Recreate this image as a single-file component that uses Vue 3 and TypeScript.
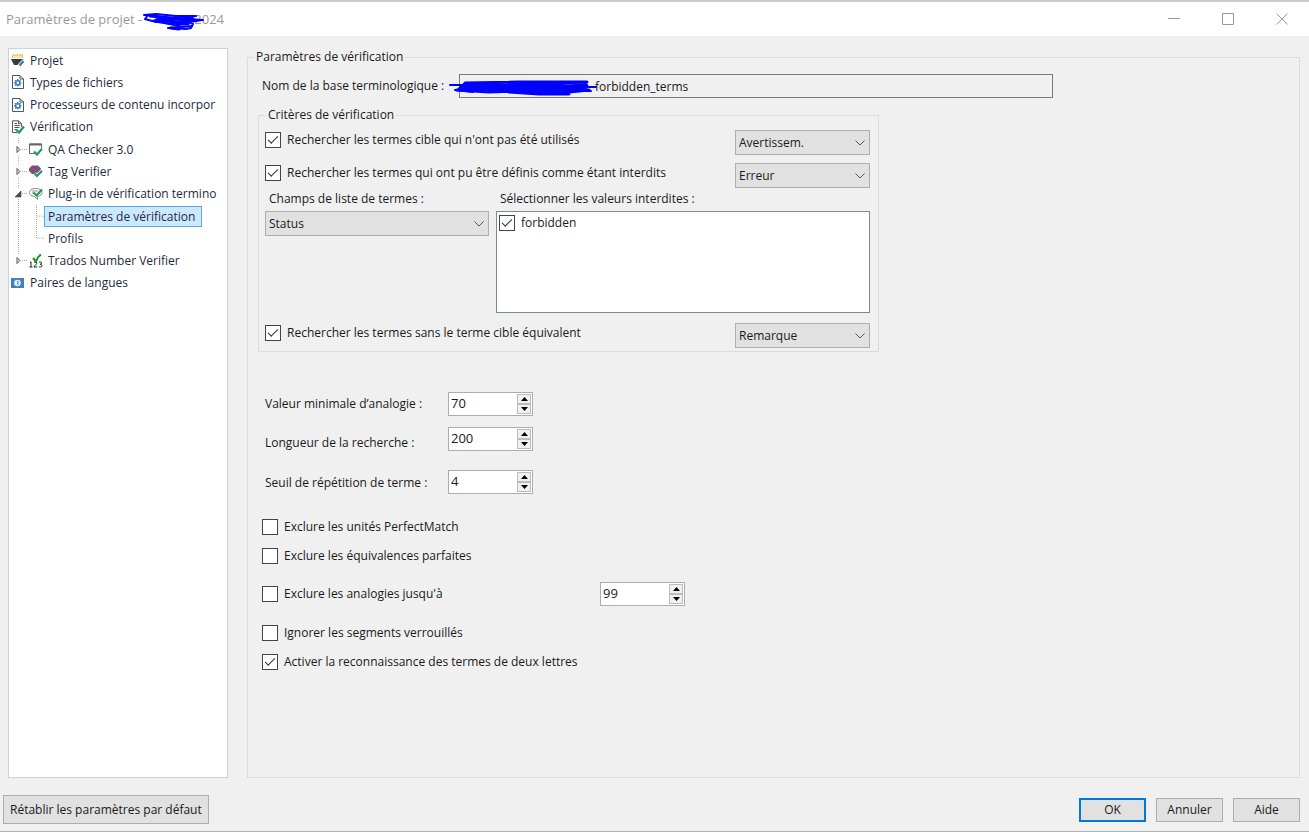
<script setup lang="ts">
import { reactive, ref } from 'vue'

type IconName = 'project' | 'file' | 'check' | 'qa' | 'tag' | 'term' | 'number' | 'lang'

interface TreeRow {
  label: string
  level: 0 | 1 | 2
  icon?: IconName
  open?: boolean
  last?: boolean
}

const rows: TreeRow[] = [
  { label: 'Projet', level: 0, icon: 'project' },
  { label: 'Types de fichiers', level: 0, icon: 'file' },
  { label: 'Processeurs de contenu incorpor', level: 0, icon: 'file' },
  { label: 'Vérification', level: 0, icon: 'check' },
  { label: 'QA Checker 3.0', level: 1, icon: 'qa' },
  { label: 'Tag Verifier', level: 1, icon: 'tag' },
  { label: 'Plug-in de vérification termino', level: 1, icon: 'term', open: true },
  { label: 'Paramètres de vérification', level: 2 },
  { label: 'Profils', level: 2, last: true },
  { label: 'Trados Number Verifier', level: 1, icon: 'number', last: true },
  { label: 'Paires de langues', level: 0, icon: 'lang' },
]

const selected = ref('Paramètres de vérification')

const form = reactive({
  termbase: 'forbidden_terms',
  unused: true,
  unusedLevel: 'Avertissem.',
  forbidden: true,
  forbiddenLevel: 'Erreur',
  field: 'Status',
  valueForbidden: true,
  missing: true,
  missingLevel: 'Remarque',
  upTo: 99,
})

const levels = ['Erreur', 'Avertissem.', 'Remarque']

const amounts = reactive([
  { id: 'min-match', label: 'Valeur minimale d’analogie :', value: 70 },
  { id: 'search-depth', label: 'Longueur de la recherche :', value: 200 },
  { id: 'repeat', label: 'Seuil de répétition de terme :', value: 4 },
])

const options = reactive([
  { id: 'perfect', label: 'Exclure les unités PerfectMatch', on: false },
  { id: 'exact', label: 'Exclure les équivalences parfaites', on: false },
  { id: 'fuzzy', label: "Exclure les analogies jusqu'à", on: false },
  { id: 'locked', label: 'Ignorer les segments verrouillés', on: false },
  { id: 'two', label: 'Activer la reconnaissance des termes de deux lettres', on: true },
])
</script>

<template>
  <div class="window">
    <header class="titlebar">
      <h1 class="title">
        <span>Paramètres de projet -</span>
        <span class="title-year">2024</span>
        <svg class="title-ink" width="64" height="20" viewBox="0 0 64 20" fill="none" stroke="#0000ff" stroke-linecap="round" stroke-linejoin="round">
          <path stroke-width="2" d="M2 4L14 3L34 5L54 5L30 8L6 4L3 8L14 11L34 7L60 9L42 12L22 8L10 10L28 13L46 11L51 13L49 17L44 18L26 17L38 16" />
          <path stroke-width="3" d="M8 5L30 7L50 7M14 9L34 11L52 9M29 17L37 18M35 13L46 13" />
          <path stroke-width="2" d="M16 7L44 9L61 9M24 12L40 16L50 15" />
        </svg>
      </h1>
      <div class="win-buttons">
        <button type="button" aria-label="Réduire">
          <svg width="12" height="12" viewBox="0 0 12 12" stroke="#999" fill="none"><path d="M0 5.5H12" /></svg>
        </button>
        <button type="button" aria-label="Agrandir">
          <svg width="12" height="12" viewBox="0 0 12 12" stroke="#999" fill="none"><path d="M.5 .5H11.5V11.5H.5Z" /></svg>
        </button>
        <button type="button" aria-label="Fermer">
          <svg width="12" height="12" viewBox="0 0 12 12" stroke="#999" fill="none"><path d="M.5 .5L11.5 11.5M11.5 .5L.5 11.5" /></svg>
        </button>
      </div>
    </header>

    <div class="body">
      <nav class="tree">
        <ul>
          <li v-for="row in rows" :key="row.label">
            <svg v-if="row.level > 0" class="guide" width="18" height="100%">
              <line v-if="!(row.level === 1 && row.last)" x1="7.5" y1="0" x2="7.5" y2="100%" />
              <line v-else x1="7.5" y1="0" x2="7.5" y2="50%" />
            </svg>
            <span v-if="row.level === 1" class="expander">
              <svg width="18" height="11" viewBox="0 0 18 11">
                <rect x="4" y="0" width="7" height="11" fill="#fff" />
                <path v-if="row.open" d="M10 3V9H4Z" fill="#505050" stroke="#404040" stroke-width=".6" />
                <path v-else d="M6 2.5L9 5.5L6 8.5Z" fill="#ddd" stroke="#555" />
                <path d="M11 5.5H17" stroke="#aaa" stroke-dasharray="1 1" />
              </svg>
            </span>
            <svg v-if="row.level === 2" class="guide" width="15" height="100%">
              <line x1="7.5" y1="0" x2="7.5" :y2="row.last ? '50%' : '100%'" />
              <line x1="8" y1="50%" x2="15" y2="50%" />
            </svg>

            <svg v-if="row.icon" class="icon" width="14" height="14" viewBox="0 0 14 14" fill="none">
              <g v-if="row.icon === 'project'">
                <path d="M1.5 5V2.5L3 1.5L4.5 2.5L6 1.5L7.5 2.5L9 1.5L10.5 2.5L11.5 1.5V5" fill="#fbe6b0" stroke="#e9b44c" />
                <path d="M0 6H12.5L10 12H3Z" fill="#3a3a3a" />
                <path d="M8 13L13 7.5" stroke="#fff" stroke-width="4" />
                <path d="M8.5 12.5L12.5 8" stroke="#3d78b8" stroke-width="2.4" />
              </g>
              <g v-else-if="row.icon === 'file'">
                <path d="M1.5 .5H9L12.5 4V13.5H1.5Z" fill="#fff" stroke="#555" />
                <path d="M9 1V4H12.5" stroke="#555" />
                <circle cx="6.8" cy="7.8" r="2.1" stroke="#3d7fc1" stroke-width="1.6" />
                <path d="M6.8 4V5.4M6.8 10.2V11.6M3 7.8H4.4M9.2 7.8H10.6M4.1 5.1L5.1 6.1M8.5 9.5L9.5 10.5M9.5 5.1L8.5 6.1M5.1 9.5L4.1 10.5" stroke="#3d7fc1" stroke-width="1.3" />
              </g>
              <g v-else-if="row.icon === 'check'">
                <path d="M6 12.5H1.5V.8H7.5L10.5 3.5V7" stroke="#555" />
                <path d="M7.5 1V3.8H10.5M3.5 3.5H6M3.5 5.5H8.5M3.5 7.5H8.5M3.5 9.5H5.5" stroke="#555" />
                <path d="M5 9.5L8 12.5L13 6.5" stroke="#1b9a62" stroke-width="2.2" />
              </g>
              <g v-else-if="row.icon === 'qa'">
                <path d="M6 11.5H.5V2H12.5V6" stroke="#666" />
                <path d="M.5 2.5H12.5" stroke="#666" stroke-width="2" />
                <path d="M5 9.5L8 12.5L13 6.8" stroke="#1b9a62" stroke-width="2.2" />
              </g>
              <g v-else-if="row.icon === 'tag'">
                <path d="M3 1.5H9L12 4.5V7L9 10H3L0 7V4.5Z" fill="#7d4f79" />
                <path d="M5.5 9.5L8 12L13 6.8" stroke="#fff" stroke-width="3.6" />
                <path d="M5.5 9.5L8 12L13 6.8" stroke="#1b9a62" stroke-width="2.2" />
              </g>
              <g v-else-if="row.icon === 'term'">
                <path d="M6.5 1.5C2.5 1.5 .5 3.3 .5 5.5C.5 7.8 2.5 9.3 5.5 9.5L8.5 12.5V9.5C11.5 9 13 7.5 13 5.5C13 3 10.5 1.5 6.5 1.5Z" fill="#fff" stroke="#8a8a8a" />
                <path d="M3 4H9M3 6H5" stroke="#999" />
                <path d="M4.5 5.5L7.5 8.5L13 2.5" stroke="#1b9a62" stroke-width="2.2" />
              </g>
              <g v-else-if="row.icon === 'number'">
                <path d="M4 4L7 7.5C8 4.5 9.5 2 12 .5" stroke="#129a1c" stroke-width="2" />
                <path d="M1 8.5L2 7.8V13M.5 13H3.5M5 8.8C5.5 7.6 8 7.8 7.8 9.3C7.6 10.5 5.5 11.5 5 13H8.2M10 8.3C11 7.5 13 8 12.6 9.3C12.4 10.1 11.5 10.3 11 10.3C12.2 10.3 13.2 10.8 13 12C12.7 13.3 10.5 13.4 9.8 12.6" stroke="#222" />
              </g>
              <g v-else>
                <rect x="0" y="2" width="13" height="10" fill="#4380bd" />
                <circle cx="6.5" cy="7" r="3.3" fill="#e6eff8" />
                <path d="M6 5L7.5 6.2L6.2 7L7.5 9" stroke="#4380bd" />
              </g>
            </svg>
            <button
              type="button"
              class="node"
              :class="{ leaf: row.level === 2, selected: row.label === selected }"
              @click="selected = row.label"
            >{{ row.label }}</button>
          </li>
        </ul>
      </nav>

      <fieldset class="panel">
        <legend>Paramètres de vérification</legend>

        <div class="termbase">
          <label for="termbase">Nom de la base terminologique :</label>
          <input id="termbase" v-model="form.termbase" type="text" readonly />
          <svg class="base-ink" width="148" height="18" viewBox="0 0 148 18" fill="none" stroke="#0000ff" stroke-linecap="round" stroke-linejoin="round">
            <path stroke-width="2" d="M1 7H20M6 12L24 14M130 13L142 13M128 9H147" />
            <path stroke-width="3" d="M16 5L70 4L138 4L60 7L14 7L10 11L50 13L110 15L140 12L90 9L30 9L8 12L40 14L100 12L138 8L80 6L20 10L70 12L120 16L90 16L60 14L134 10" />
            <path stroke-width="6" d="M16 8L60 9L100 12L136 8" />
          </svg>
        </div>

        <fieldset class="criteria">
          <legend>Critères de vérification</legend>
          <div class="criterion">
            <label class="tick"><input v-model="form.unused" type="checkbox" />Rechercher les termes cible qui n'ont pas été utilisés</label>
            <span class="combo">
              <select v-model="form.unusedLevel" aria-label="Gravité des termes non utilisés">
                <option v-for="l in levels" :key="l">{{ l }}</option>
              </select>
              <svg width="10" height="6" viewBox="0 0 10 6"><path d="M.5 .5L5 5L9.5 .5" /></svg>
            </span>
          </div>
          <div class="criterion">
            <label class="tick"><input v-model="form.forbidden" type="checkbox" />Rechercher les termes qui ont pu être définis comme étant interdits</label>
            <span class="combo">
              <select v-model="form.forbiddenLevel" aria-label="Gravité des termes interdits">
                <option v-for="l in levels" :key="l">{{ l }}</option>
              </select>
              <svg width="10" height="6" viewBox="0 0 10 6"><path d="M.5 .5L5 5L9.5 .5" /></svg>
            </span>
          </div>
          <div class="values">
            <div class="field">
              <label for="field">Champs de liste de termes :</label>
              <span class="combo">
                <select id="field" v-model="form.field"><option>Status</option></select>
                <svg width="10" height="6" viewBox="0 0 10 6"><path d="M.5 .5L5 5L9.5 .5" /></svg>
              </span>
            </div>
            <div class="picks">
              <span id="picks-label">Sélectionner les valeurs interdites :</span>
              <div class="list" role="group" aria-labelledby="picks-label">
                <label class="tick"><input v-model="form.valueForbidden" type="checkbox" />forbidden</label>
              </div>
            </div>
          </div>
          <div class="criterion">
            <label class="tick"><input v-model="form.missing" type="checkbox" />Rechercher les termes sans le terme cible équivalent</label>
            <span class="combo">
              <select v-model="form.missingLevel" aria-label="Gravité des termes sans équivalent">
                <option v-for="l in levels" :key="l">{{ l }}</option>
              </select>
              <svg width="10" height="6" viewBox="0 0 10 6"><path d="M.5 .5L5 5L9.5 .5" /></svg>
            </span>
          </div>
        </fieldset>

        <div class="amounts">
          <div v-for="a in amounts" :key="a.id" class="amount" :class="a.id">
            <label :for="a.id">{{ a.label }}</label>
            <span class="spin">
              <input :id="a.id" v-model.number="a.value" type="text" inputmode="numeric" />
              <span class="arrows">
                <button type="button" aria-label="Augmenter" @click="a.value++"><svg width="7" height="4" viewBox="0 0 7 4"><path d="M3.5 0L7 4H0Z" /></svg></button>
                <button type="button" aria-label="Diminuer" @click="a.value--"><svg width="7" height="4" viewBox="0 0 7 4"><path d="M0 0H7L3.5 4Z" /></svg></button>
              </span>
            </span>
          </div>
        </div>

        <div class="options">
          <div v-for="o in options" :key="o.id" class="option" :class="o.id">
            <label class="tick"><input v-model="o.on" type="checkbox" />{{ o.label }}</label>
            <span v-if="o.id === 'fuzzy'" class="spin">
              <input v-model.number="form.upTo" type="text" inputmode="numeric" aria-label="Analogies exclues jusqu'à" />
              <span class="arrows">
                <button type="button" aria-label="Augmenter" @click="form.upTo++"><svg width="7" height="4" viewBox="0 0 7 4"><path d="M3.5 0L7 4H0Z" /></svg></button>
                <button type="button" aria-label="Diminuer" @click="form.upTo--"><svg width="7" height="4" viewBox="0 0 7 4"><path d="M0 0H7L3.5 4Z" /></svg></button>
              </span>
            </span>
          </div>
        </div>
      </fieldset>
    </div>

    <footer class="footer">
      <button type="button" class="push reset">Rétablir les paramètres par défaut</button>
      <div class="actions">
        <button type="button" class="push primary">OK</button>
        <button type="button" class="push">Annuler</button>
        <button type="button" class="push">Aide</button>
      </div>
    </footer>
  </div>
</template>

<style>
body {
  margin: 0;
  background: #f0f0f0;
}
</style>

<style scoped>
.window {
  box-sizing: border-box;
  min-height: 100vh;
  display: flex;
  flex-direction: column;
  border-top: 2px solid #cccccc;
  border-bottom: 1px solid #b4b4b4;
  background: #f0f0f0;
  color: #1a1a1a;
  font: 12px/18px 'Segoe UI', 'Open Sans', 'Noto Sans', sans-serif;
}
.window *,
.window *::before {
  box-sizing: border-box;
}
button,
input,
select {
  font: inherit;
  color: inherit;
  margin: 0;
}

.titlebar {
  display: flex;
  justify-content: space-between;
  align-items: center;
  height: 34px;
  padding-left: 6px;
  background: #fff;
}
.title {
  position: relative;
  display: flex;
  justify-content: space-between;
  width: 218px;
  margin: 0;
  font-size: 13px;
  font-weight: 400;
  color: #999;
}
.title-ink {
  position: absolute;
  left: 136px;
  top: 1px;
}
.win-buttons {
  display: flex;
}
.win-buttons button {
  width: 54px;
  height: 34px;
  padding: 0;
  border: 0;
  background: none;
}
.win-buttons svg {
  display: block;
  margin: auto;
}

.body {
  flex: 1;
  display: flex;
  gap: 19px;
  padding: 12px 9px 0 8px;
}
.tree {
  flex: 0 0 220px;
  overflow: hidden;
  border: 1px solid #c4d5dc;
  background: #fff;
  color: #1e2b3c;
}
.tree ul {
  display: grid;
  grid-template-rows: repeat(11, minmax(0, 1fr));
  height: 245px;
  margin: 0;
  padding: 0 0 0 2px;
  list-style: none;
}
.tree li {
  position: relative;
  display: flex;
  align-items: center;
  min-height: 0;
  white-space: nowrap;
}
.guide {
  flex: none;
}
.guide line {
  stroke: #b0b0b0;
  stroke-dasharray: 1 1;
}
.expander {
  position: absolute;
  left: 0;
  display: flex;
}
.icon {
  flex: none;
  margin-right: 2px;
}
.node {
  padding: 0 2px;
  border: 1px solid transparent;
  background: none;
  line-height: 19px;
  white-space: nowrap;
}
.leaf {
  padding: 0 6px 0 3px;
}
.selected {
  border-color: #5aa9e0;
  background: #cce8ff;
}

fieldset {
  min-width: 0;
  margin: 0;
  padding: 0;
  border: 1px solid #dcdcdc;
}
legend {
  padding: 0 2px;
}
.panel {
  flex: 1;
}
.panel > legend {
  margin-left: 6px;
}

.termbase {
  position: relative;
  display: flex;
  align-items: center;
  margin: 8px 14px 0;
}
.termbase label {
  flex: 0 0 197px;
  white-space: nowrap;
}
.termbase input {
  flex: 0 1 594px;
  min-width: 0;
  height: 24px;
  padding: 0 0 0 135px;
  border: 1px solid #7a7a7a;
  background: #f0f0f0;
}
.base-ink {
  position: absolute;
  left: 187px;
  top: 4px;
}

.criteria {
  max-width: 621px;
  margin: 8px 0 0 10px;
  padding: 0 8px 3px 6px;
}
.criteria > legend {
  margin-left: 1px;
}
.criterion {
  display: flex;
  justify-content: space-between;
  align-items: flex-start;
  padding-top: 6px;
}
.criterion .combo {
  width: 135px;
}
.criterion + .criterion {
  padding-top: 8px;
}
.tick {
  display: flex;
  align-items: center;
  gap: 6px;
  line-height: 20px;
  white-space: nowrap;
}
.tick input {
  appearance: none;
  flex: none;
  display: grid;
  place-items: center;
  width: 16px;
  height: 16px;
  border: 1px solid #444;
  background: #fff;
}
.tick input:checked::before {
  content: '';
  width: 10px;
  height: 5px;
  margin-bottom: 3px;
  border-left: 1px solid #333;
  border-bottom: 1px solid #333;
  transform: rotate(-45deg);
}
.combo {
  position: relative;
  display: block;
}
.combo select {
  appearance: none;
  display: block;
  width: 100%;
  height: 25px;
  padding: 0 22px 0 3px;
  border: 1px solid #adadad;
  border-radius: 0;
  background: #e1e1e1;
}
.combo svg {
  position: absolute;
  right: 5px;
  top: 10px;
  fill: none;
  stroke: #555;
  pointer-events: none;
}
.values {
  display: flex;
  gap: 7px;
  padding: 2px 0 4px;
}
.values .field {
  flex: 0 0 224px;
}
.field > label,
.picks > span {
  display: block;
  padding: 0 4px 3px;
}
.picks {
  flex: 1;
}
.list {
  height: 102px;
  padding: 1px 2px;
  border: 1px solid #828790;
  background: #fff;
}

.amounts {
  padding: 40px 0 0 17px;
}
.amount {
  display: flex;
  align-items: center;
}
.amount label {
  flex: 0 0 183px;
}
.search-depth {
  margin: 10px 0 18px;
}
.search-depth label {
  padding-top: 8px;
}
.repeat label {
  padding-top: 2px;
}
.spin {
  display: flex;
  width: 85px;
  height: 24px;
  padding: 1px;
  border: 1px solid #abadb3;
  background: #fff;
}
.spin input {
  flex: 1;
  min-width: 0;
  padding: 0 1px 2px;
  border: 0;
  background: none;
  font-size: 13px;
}
.arrows {
  flex: 0 0 14px;
  display: flex;
  flex-direction: column;
}
.arrows button {
  flex: 1;
  display: grid;
  place-items: center;
  padding: 0;
  border: 1px solid #bcbcbc;
  background: #f0f0f0;
}

.options {
  padding: 23px 0 0 14px;
}
.option {
  display: flex;
  align-items: center;
}
.option.exact,
.option.two {
  margin-top: 9px;
}
.option.fuzzy {
  margin-top: 16px;
}
.option.locked {
  margin-top: 17px;
}
.fuzzy .tick {
  flex: 0 0 338px;
}

.footer {
  display: flex;
  justify-content: space-between;
  align-items: center;
  padding: 17px 9px 7px 3px;
}
.actions {
  display: flex;
  gap: 10px;
}
.push {
  min-width: 67px;
  height: 24px;
  padding: 0 6px;
  border: 1px solid #adadad;
  background: #e1e1e1;
  white-space: nowrap;
}
.reset {
  height: 29px;
}
.primary {
  border: 2px solid #0078d7;
}
</style>
